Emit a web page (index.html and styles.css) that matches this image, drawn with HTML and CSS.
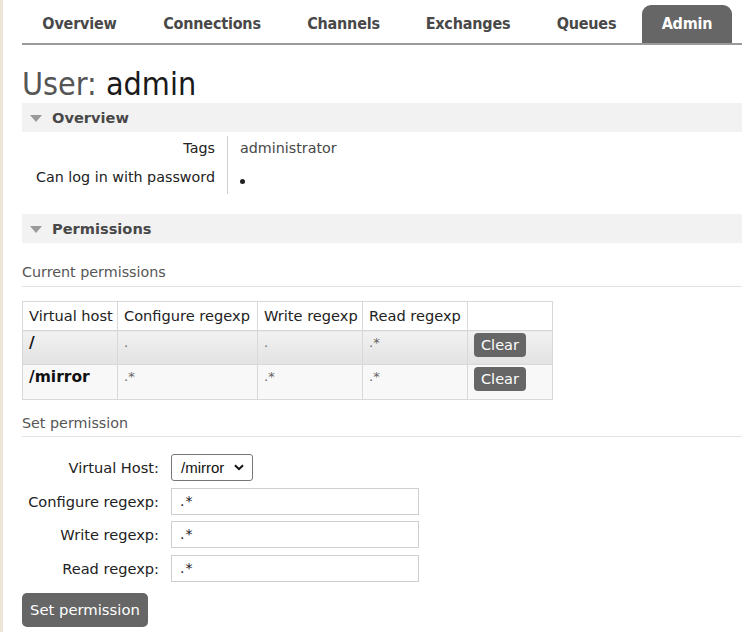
FILE: index.html
```html
<!DOCTYPE html>
<html>
<head>
<meta charset="utf-8">
<link rel="stylesheet" href="styles.css">
</head>
<body>
<div class="page">
  <nav class="tabs">
    <a class="tab t-overview">Overview</a>
    <a class="tab t-connections">Connections</a>
    <a class="tab t-channels">Channels</a>
    <a class="tab t-exchanges">Exchanges</a>
    <a class="tab t-queues">Queues</a>
    <a class="tab active">Admin</a>
  </nav>

  <h1 class="title"><span class="title-pre">User:</span> <span class="title-name">admin</span></h1>

  <div class="section-head first-head"><span class="tri"></span>Overview</div>
  <div class="facts">
    <div class="fact-label">Tags</div><div class="fact-value">administrator</div>
    <div class="fact-label">Can log in with password</div><div class="fact-value"><span class="dot"></span></div>
  </div>

  <div class="section-head perm-head"><span class="tri"></span>Permissions</div>

  <h3 class="subhead">Current permissions</h3>
  <table class="perms">
    <tr class="hdr">
      <th class="c1">Virtual host</th><th class="c2">Configure regexp</th><th class="c3">Write regexp</th><th class="c4">Read regexp</th><th class="c5"></th>
    </tr>
    <tr class="row1">
      <td class="vh">/</td><td class="rx">.</td><td class="rx">.</td><td class="rx">.*</td><td class="act"><button class="btn-small">Clear</button></td>
    </tr>
    <tr class="row2">
      <td class="vh">/mirror</td><td class="rx">.*</td><td class="rx">.*</td><td class="rx">.*</td><td class="act"><button class="btn-small">Clear</button></td>
    </tr>
  </table>

  <h3 class="subhead set-head">Set permission</h3>
  <div class="form">
    <label class="flabel">Virtual Host:</label>
    <div><span class="select">/mirror<svg class="chev" viewBox="0 0 10 7" width="10" height="7"><path d="M1 1.2 L5 5.2 L9 1.2" fill="none" stroke="#111" stroke-width="2"/></svg></span></div>
    <label class="flabel">Configure regexp:</label>
    <div><span class="input">.*</span></div>
    <label class="flabel">Write regexp:</label>
    <div><span class="input">.*</span></div>
    <label class="flabel">Read regexp:</label>
    <div><span class="input">.*</span></div>
  </div>
  <button class="btn-big">Set permission</button>
</div>
</body>
</html>
```

FILE: styles.css
```css
html, body {
  margin: 0;
  padding: 0;
  background: #ffffff;
}
body {
  font-family: "DejaVu Sans", Verdana, sans-serif;
  font-size: 14.3px;
  color: #484848;
  overflow: hidden;
  height: 632px;
}
.page {
  border-left: 3px solid #ece5da;
  padding-left: 19px;
  height: 632px;
  box-sizing: border-box;
}
.tabs {
  display: flex;
  align-items: flex-end;
  height: 43px;
  border-bottom: 2px solid #9a9a9a;
}
.tab {
  font-family: "DejaVu Sans Condensed", "DejaVu Sans", sans-serif;
  font-stretch: condensed;
  font-weight: bold;
  font-size: 16px;
  color: #484848;
  height: 38px;
  line-height: 38px;
  text-align: center;
  letter-spacing: -0.2px;
}
.t-overview { width: 115px; }
.t-connections { width: 150px; }
.t-channels { width: 113px; }
.t-exchanges { width: 136px; }
.t-queues { width: 101px; margin-right: 5px; }
.tab.active {
  width: 90px;
  background: #666666;
  color: #ffffff;
  border-radius: 9px 9px 0 0;
}
.title {
  margin: 21px 0 0 0;
  font-family: "DejaVu Sans Condensed", "DejaVu Sans", sans-serif;
  font-stretch: condensed;
  font-weight: normal;
  font-size: 32px;
  line-height: 36px;
  height: 36px;
}
.title-pre { color: #555555; }
.title-name { color: #1a1a1a; }
.section-head {
  background: #f2f2f2;
  height: 29px;
  line-height: 29px;
  font-weight: bold;
  font-size: 14.6px;
  color: #484848;
  display: flex;
  align-items: center;
}
.first-head { margin-top: 1px; }
.tri {
  width: 0;
  height: 0;
  border-left: 6px solid transparent;
  border-right: 6px solid transparent;
  border-top: 7px solid #9a9a9a;
  margin: 1px 10px 0 8px;
}
.facts {
  display: grid;
  grid-template-columns: 206px auto;
  margin-top: 4px;
  width: 360px;
}
.fact-label {
  text-align: right;
  color: #222222;
  padding: 1px 12px 0 0;
  border-right: 1px solid #d0d0d0;
  height: 28px;
  line-height: 22px;
}
.fact-value {
  padding: 1px 0 0 12px;
  color: #484848;
  height: 28px;
  line-height: 22px;
  display: flex;
  align-items: flex-start;
}
.dot {
  width: 5px;
  height: 5px;
  border-radius: 50%;
  background: #222222;
  margin-top: 13px;
}
.perm-head { margin-top: 20px; }
.subhead {
  font-weight: normal;
  font-size: 14.3px;
  color: #555555;
  margin: 21px 0 0 0;
  padding-bottom: 5px;
  border-bottom: 1px solid #e2e2e2;
  line-height: 17px;
}
.perms {
  border-collapse: collapse;
  table-layout: fixed;
  width: 530px;
  margin-top: 14px;
  border: 1px solid #d8d8d8;
}
.perms th, .perms td {
  border: 1px solid #d8d8d8;
  padding: 0 6px;
  text-align: left;
  box-sizing: border-box;
}
.perms th {
  font-weight: normal;
  color: #222222;
  height: 29px;
  padding-bottom: 2px;
  background: #ffffff;
  font-size: 14.6px;
  white-space: nowrap;
}
.perms .c1 { width: 95px; }
.perms .c2 { width: 140px; }
.perms .c3 { width: 105px; }
.perms .c4 { width: 105px; }
.perms .c5 { width: 85px; }
.perms .row1 td {
  height: 34px;
  background: linear-gradient(#f2f2f2, #e2e2e2);
}
.perms .row2 td {
  height: 35px;
  background: #f8f8f8;
}
.perms td.vh {
  font-weight: bold;
  color: #111111;
  font-size: 15.5px;
  vertical-align: top;
  padding-top: 3px;
}
.perms td.rx {
  vertical-align: top;
  padding-top: 4px;
  color: #666666;
  font-size: 13px;
}
.perms td.act {
  vertical-align: top;
  padding-top: 2px;
}
.btn-small {
  display: block;
  font-family: "DejaVu Sans", sans-serif;
  font-size: 14.5px;
  background: #666666;
  color: #ffffff;
  border: 0;
  border-radius: 4px;
  padding: 0 7px;
  height: 24px;
  line-height: 24px;
}
.set-head { margin-top: 15px; padding-bottom: 4px; }
.form {
  display: grid;
  grid-template-columns: 137px auto;
  column-gap: 12px;
  row-gap: 6.5px;
  margin-top: 17px;
  width: 420px;
}
.flabel {
  text-align: right;
  color: #222222;
  line-height: 27px;
  font-size: 14.6px;
  white-space: nowrap;
}
.select {
  display: inline-flex;
  align-items: center;
  height: 27px;
  box-sizing: border-box;
  border: 1px solid #767676;
  border-radius: 3px;
  padding: 0 8px 0 9px;
  font-family: "Liberation Sans", Arial, sans-serif;
  font-size: 15px;
  color: #111111;
  gap: 10px;
}
.input {
  display: block;
  width: 248px;
  height: 27px;
  box-sizing: border-box;
  border: 1px solid #cfcfcf;
  padding: 0 8px;
  line-height: 25px;
  font-size: 14px;
  color: #222222;
  letter-spacing: 1px;
}
.btn-big {
  margin-top: 11px;
  font-family: "DejaVu Sans", sans-serif;
  font-size: 14.8px;
  background: #666666;
  color: #ffffff;
  border: 0;
  border-radius: 5px;
  height: 34px;
  padding: 0 8px;
  display: block;
}
```
